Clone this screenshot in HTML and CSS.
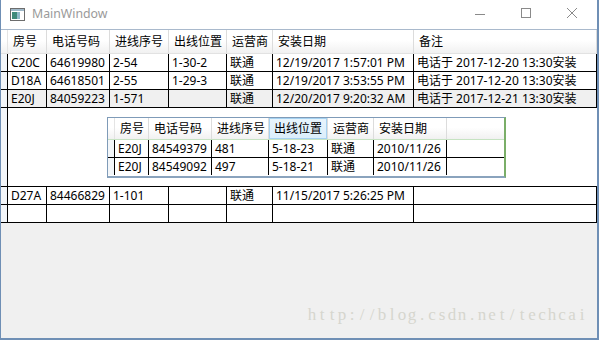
FILE: index.html
```html
<!DOCTYPE html>
<html>
<head>
<meta charset="utf-8">
<link rel="stylesheet" href="styles.css">
</head>
<body>
<div class="window">
  <div class="titlebar">
    <svg class="appicon" width="15" height="13" viewBox="0 0 15 13">
      <rect x="0.5" y="0.5" width="14" height="12" fill="#ffffff" stroke="#6d6d6d"/>
      <rect x="1" y="1" width="13" height="2" fill="#9fb8c8"/>
      <rect x="2" y="4" width="5" height="7" fill="#3f8a7a"/>
      <rect x="7" y="4" width="3" height="7" fill="#8fb8c8"/>
    </svg>
    <span class="title">MainWindow</span>
    <div class="controls">
      <svg class="ctl" width="46" height="29" viewBox="0 0 46 29"><line x1="18" y1="14.5" x2="28" y2="14.5" stroke="#8a8a8a" stroke-width="1"/></svg>
      <svg class="ctl" width="46" height="29" viewBox="0 0 46 29"><rect x="18.5" y="8.5" width="9" height="9" fill="none" stroke="#8a8a8a" stroke-width="1"/></svg>
      <svg class="ctl" width="46" height="29" viewBox="0 0 46 29"><path d="M18 8 L28 18 M28 8 L18 18" stroke="#8a8a8a" stroke-width="1"/></svg>
    </div>
  </div>
  <div class="client">
    <div class="dg">
      <div class="row head">
        <div class="rh"></div>
        <div class="hc w1">房号</div>
        <div class="hc w2">电话号码</div>
        <div class="hc w3">进线序号</div>
        <div class="hc w4">出线位置</div>
        <div class="hc w5">运营商</div>
        <div class="hc w6">安装日期</div>
        <div class="hc w7">备注</div>
      </div>
      <div class="row">
        <div class="rh"></div>
        <div class="cell w1">C20C</div>
        <div class="cell w2">64619980</div>
        <div class="cell w3">2-54</div>
        <div class="cell w4">1-30-2</div>
        <div class="cell w5">联通</div>
        <div class="cell w6">12/19/2017 1:57:01 PM</div>
        <div class="cell w7">电话于 2017-12-20 13:30安装</div>
      </div>
      <div class="row">
        <div class="rh"></div>
        <div class="cell w1">D18A</div>
        <div class="cell w2">64618501</div>
        <div class="cell w3">2-55</div>
        <div class="cell w4">1-29-3</div>
        <div class="cell w5">联通</div>
        <div class="cell w6">12/19/2017 3:53:55 PM</div>
        <div class="cell w7">电话于 2017-12-20 13:30安装</div>
      </div>
      <div class="row selected">
        <div class="rh"></div>
        <div class="cell w1">E20J</div>
        <div class="cell w2">84059223</div>
        <div class="cell w3">1-571</div>
        <div class="cell w4"></div>
        <div class="cell w5">联通</div>
        <div class="cell w6">12/20/2017 9:20:32 AM</div>
        <div class="cell w7">电话于 2017-12-21 13:30安装</div>
      </div>
      <div class="details">
        <div class="rh"></div>
        <div class="details-body">
          <div class="ndg">
            <div class="nrow nhead">
              <div class="nrh"></div>
              <div class="nhc n1">房号</div>
              <div class="nhc n2">电话号码</div>
              <div class="nhc n3">进线序号</div>
              <div class="nhc n4 hot">出线位置</div>
              <div class="nhc n5">运营商</div>
              <div class="nhc n6">安装日期</div>
              <div class="nhc nf"></div>
            </div>
            <div class="nrow">
              <div class="nrh"></div>
              <div class="ncell n1">E20J</div>
              <div class="ncell n2">84549379</div>
              <div class="ncell n3">481</div>
              <div class="ncell n4">5-18-23</div>
              <div class="ncell n5">联通</div>
              <div class="ncell n6">2010/11/26</div>
              <div class="ncell nf"></div>
            </div>
            <div class="nrow">
              <div class="nrh"></div>
              <div class="ncell n1">E20J</div>
              <div class="ncell n2">84549092</div>
              <div class="ncell n3">497</div>
              <div class="ncell n4">5-18-21</div>
              <div class="ncell n5">联通</div>
              <div class="ncell n6">2010/11/26</div>
              <div class="ncell nf"></div>
            </div>
          </div>
        </div>
      </div>
      <div class="row">
        <div class="rh"></div>
        <div class="cell w1">D27A</div>
        <div class="cell w2">84466829</div>
        <div class="cell w3">1-101</div>
        <div class="cell w4"></div>
        <div class="cell w5">联通</div>
        <div class="cell w6">11/15/2017 5:26:25 PM</div>
        <div class="cell w7"></div>
      </div>
      <div class="row">
        <div class="rh"></div>
        <div class="cell w1"></div>
        <div class="cell w2"></div>
        <div class="cell w3"></div>
        <div class="cell w4"></div>
        <div class="cell w5"></div>
        <div class="cell w6"></div>
        <div class="cell w7"></div>
      </div>
    </div>
    <div class="watermark"><span>h</span><span>t</span><span>t</span><span>p</span><span>:</span><span>/</span><span>/</span><span>b</span><span>l</span><span>o</span><span>g</span><span>.</span><span>c</span><span>s</span><span>d</span><span>n</span><span>.</span><span>n</span><span>e</span><span>t</span><span>/</span><span>t</span><span>e</span><span>c</span><span>h</span><span>c</span><span>a</span><span>i</span></div>
  </div>
</div>
</body>
</html>
```

FILE: styles.css
```css
* { box-sizing: border-box; }
html, body { margin: 0; padding: 0; }
body {
  width: 599px;
  height: 340px;
  overflow: hidden;
  font-family: "Noto Sans", "Noto Sans CJK SC", sans-serif;
  font-size: 12px;
  color: #000;
}
.window {
  width: 599px;
  height: 340px;
  border-left: 1px solid #6f8fb5;
  border-right: 2px solid #6f8fb5;
  border-bottom: 2px solid #6f8fb5;
  background: #f0f0f0;
  display: flex;
  flex-direction: column;
}
.titlebar {
  height: 29px;
  background: #fff;
  display: flex;
  align-items: center;
  flex: none;
}
.appicon { margin-left: 9px; margin-top: -1px; }
.title {
  margin-left: 7px;
  color: #9a9a9a;
  font-size: 12.3px;
  line-height: 16px;
  margin-top: -2px;
}
.controls { margin-left: auto; display: flex; margin-right: 2px; }
.ctl { display: block; }
.client {
  flex: 1;
  position: relative;
  background: #f0f0f0;
}
.dg {
  border-top: 1px solid #a9b9cc;
  background: #fff;
}
.row {
  display: flex;
  height: 18px;
  line-height: 17px;
  border-bottom: 1px solid #000;
  white-space: nowrap;
}
.row.selected .cell { background: #f0f0f0; }
.rh {
  width: 6px;
  flex: none;
  background: #f3f6f9;
  border-right: 1px solid #e2e8ef;
}
.row .rh, .details .rh { width: 7px; border-right: 1px solid #000; background: #f3f6f9; }
.row.head .rh { border-right: 1px solid #e4e4e4; background: linear-gradient(#fff, #fff 45%, #f1f1f1); }
.row.head {
  height: 24px;
  line-height: 23px;
  border-bottom: 1px solid #e2e2e2;
  background: linear-gradient(#ffffff, #ffffff 45%, #f1f1f1);
}
.cell, .hc {
  flex: none;
  border-right: 1px solid #000;
  padding-left: 3px;
  overflow: hidden;
}
.hc {
  border-right: 1px solid #dcdcdc;
  padding-left: 5px;
}
.w1 { width: 39px; }
.w2 { width: 63px; }
.w3 { width: 59px; }
.w4 { width: 58px; }
.w5 { width: 46px; }
.w6 { width: 141px; }
.w7 { width: 183px; }

.details {
  display: flex;
  height: 79px;
  border-bottom: 1px solid #000;
}
.details-body {
  flex: 1;
  padding-top: 9px;
  padding-left: 99px;
}
.ndg {
  width: 399px;
  height: 61px;
  border-top: 1px solid #7f9bb8;
  border-left: 1px solid #7f9bb8;
  border-bottom: 2px solid #8aa3bd;
  border-right: 2px solid #7aae68;
  background: #fff;
}
.nrow {
  display: flex;
  height: 18px;
  line-height: 17px;
  border-bottom: 1px solid #000;
  white-space: nowrap;
}
.nrow:last-child { border-bottom: none; height: 17px; }
.nrow .nrh { width: 7px; flex: none; border-right: 1px solid #000; background: #f3f6f9; }
.nhead {
  height: 22px;
  line-height: 21px;
  border-bottom: 1px solid #c6e3c2;
  background: linear-gradient(#ffffff, #ffffff 45%, #f1f1f1);
}
.nhead .nrh { border-right: 1px solid #e4e4e4; background: transparent; }
.nhc, .ncell {
  flex: none;
  border-right: 1px solid #000;
  padding-left: 3px;
  overflow: hidden;
}
.nhc { border-right: 1px solid #dcdcdc; padding-left: 5px; }
.nhc.hot {
  background: linear-gradient(#e8f4fc, #dbeefb);
  box-shadow: inset 0 0 0 1px #a6d2f1;
}
.nf { border-right: none; flex: 1; }
.n1 { width: 34px; }
.n2 { width: 63px; }
.n3 { width: 57px; }
.n4 { width: 59px; }
.n5 { width: 46px; }
.n6 { width: 73px; }

.watermark {
  position: absolute;
  left: 306px;
  top: 276px;
  display: flex;
  font-family: "Liberation Serif", serif;
  font-size: 17px;
  line-height: 20px;
  color: #d6d6ce;
  white-space: nowrap;
}
.watermark span {
  width: 10px;
  text-align: center;
}
```
